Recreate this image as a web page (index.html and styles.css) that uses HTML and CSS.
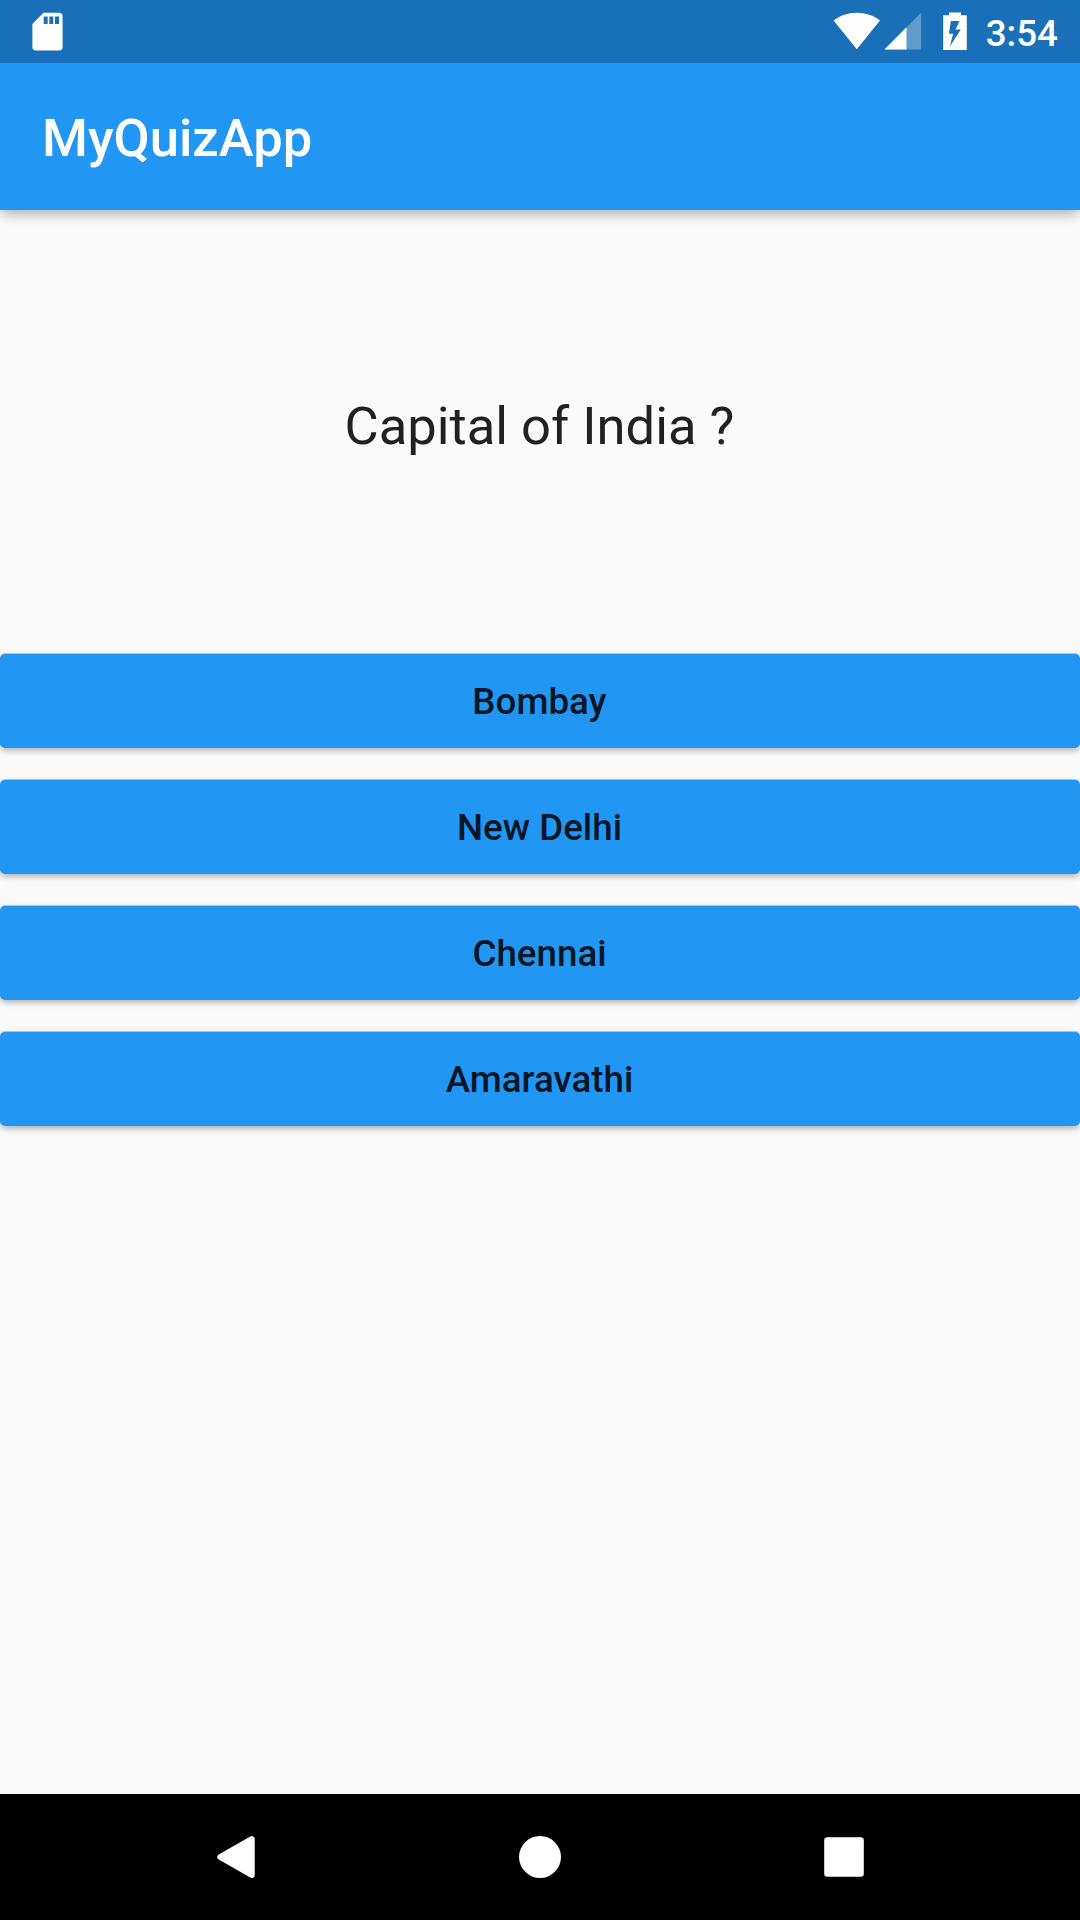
FILE: index.html
```html
<!DOCTYPE html>
<html lang="en">
<head>
<meta charset="utf-8">
<title>MyQuizApp</title>
<link rel="stylesheet" href="styles.css">
</head>
<body>
<div class="screen">
  <div class="status-bar">
    <svg class="icon-sd" width="32" height="40" viewBox="0 0 32 40"><path fill="#fff" fill-rule="evenodd" d="M11.500.7H27a3.600 3.600 0 0 1 3.600 3.600V35a3.600 3.600 0 0 1-3.600 3.600H4A3.600 3.600 0 0 1 .4 35V12ZM11.700 4.400V12h4V4.400ZM17.300 4.400V12h4V4.400ZM23 4.400V12h4V4.400Z"/></svg>
    <div class="status-right">
      <svg class="icon-wifi" width="48" height="38" viewBox="0 0 48 38"><path fill="#fff" d="M23.800 37.200.6 8.500C7 3.600 15 .8 23.800.8s17 2.800 23.200 7.700Z"/></svg>
      <svg class="icon-signal" width="38" height="38" viewBox="0 0 38 38"><path fill="#fff" fill-opacity=".3" d="M.5 37.500H37.100V.8Z"/><path fill="#fff" d="M.5 37.500H22.500V15.300Z"/></svg>
      <svg class="icon-battery" width="24" height="39" viewBox="0 0 24 39"><path fill="#fff" fill-rule="evenodd" d="M6.200.4H18V3.200H23.800V38H.2V3.200H6.200ZM7.800 9 6 21.700H10.200L6.800 34.500 17.800 17.400H12.600L16.500 9Z"/></svg>
      <span class="clock">3:54</span>
    </div>
  </div>
  <header class="app-bar"><h1 class="app-title">MyQuizApp</h1></header>
  <main class="content">
    <p class="question">Capital of India ?</p>
    <div class="answers">
      <button class="answer">Bombay</button>
      <button class="answer">New Delhi</button>
      <button class="answer">Chennai</button>
      <button class="answer">Amaravathi</button>
    </div>
  </main>
  <nav class="nav-bar">
    <svg width="48" height="48" viewBox="0 0 48 48"><path fill="#fff" stroke="#fff" stroke-width="6" stroke-linejoin="round" d="M39.700 6.100V41.900L8.300 24Z"/></svg>
    <svg width="48" height="48" viewBox="0 0 48 48"><circle cx="24" cy="24" r="21" fill="#fff"/></svg>
    <svg width="48" height="48" viewBox="0 0 48 48"><rect x="4.200" y="4.200" width="39.600" height="39.600" rx="3" fill="#fff"/></svg>
  </nav>
</div>
</body>
</html>
```
FILE: styles.css
```css
* { box-sizing: border-box; }
body { margin: 0; font-family: Roboto, sans-serif; }
.screen {
  width: 1080px;
  height: 1920px;
  display: flex;
  flex-direction: column;
  overflow: hidden;
  background: #fafafa;
}
.status-bar {
  position: relative;
  z-index: 1;
  flex: none;
  height: 63px;
  padding: 12px 21px 0 32px;
  display: flex;
  justify-content: space-between;
  align-items: flex-start;
  background: #1a70b8;
}
.status-right { display: flex; align-items: flex-start; }
.icon-signal { margin-left: 3px; }
.icon-battery { margin-left: 21px; }
.clock {
  margin-left: 19px;
  margin-right: 1px;
  color: #fff;
  font-size: 36.75px;
  font-weight: 500;
  line-height: 43px;
}
.app-bar {
  flex: none;
  height: 147px;
  padding: 2px 0 0 42px;
  display: flex;
  align-items: center;
  background: #2196f3;
  box-shadow: 0 6px 10px -2px rgba(0, 0, 0, .2), 0 4px 14px rgba(0, 0, 0, .12);
}
.app-title {
  margin: 0;
  color: #fff;
  font-size: 52.5px;
  font-weight: 500;
  line-height: 62px;
}
.content { flex: 1; display: flex; flex-direction: column; }
.question {
  margin: 0;
  height: 444px;
  padding: 185px 1px 0 0;
  text-align: center;
  color: #212121;
  font-size: 52.5px;
  line-height: 62px;
}
.answers { display: flex; flex-direction: column; gap: 32px; }
.answer {
  height: 94px;
  padding: 1px 1px 0 0;
  border: 0;
  border-radius: 5px;
  background: #2196f3;
  color: rgba(0, 0, 0, .87);
  font: 500 36.75px/43px Roboto, sans-serif;
  box-shadow: 0 -1px 0 rgba(33, 150, 243, .4), 0 3px 6px -1px rgba(0, 0, 0, .25), 0 2px 8px rgba(0, 0, 0, .1);
}
.nav-bar {
  flex: none;
  height: 126px;
  padding: 0 84px;
  display: grid;
  grid-template-columns: repeat(3, 1fr);
  place-items: center;
  background: #000;
}
```
